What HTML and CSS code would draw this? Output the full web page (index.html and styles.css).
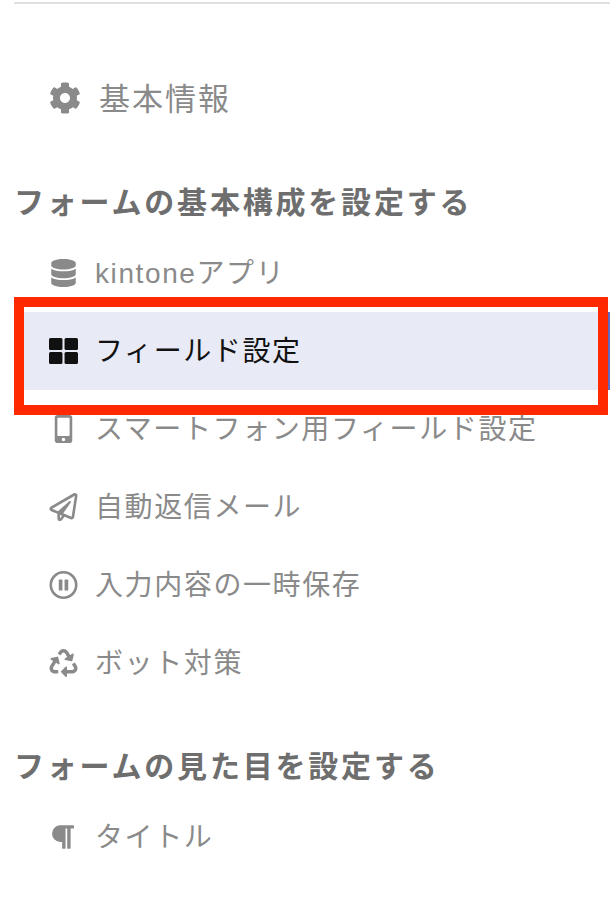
FILE: index.html
```html
<!DOCTYPE html>
<html lang="ja">
<head>
    <meta charset="UTF-8">
    <meta name="viewport" content="width=device-width, initial-scale=1.0">
    <title>フォーム設定</title>
    <link rel="stylesheet" href="styles.css">
</head>
<body>

    <nav class="sidebar">
        <a class="item item-top">
            <svg class="icon icon-gear" viewBox="0 0 512 512"><path d="M487.4 315.7l-42.6-24.6c4.3-23.2 4.3-47 0-70.2l42.6-24.6c4.9-2.8 7.1-8.6 5.5-14-11.1-35.6-30-67.8-54.7-94.6-3.8-4.1-10-5.1-14.8-2.3L380.8 110c-17.9-15.4-38.5-27.3-60.8-35.1V25.8c0-5.6-3.9-10.5-9.4-11.7-36.7-8.2-74.3-7.8-109.2 0-5.5 1.2-9.4 6.1-9.4 11.7V75c-22.2 7.9-42.8 19.8-60.8 35.1L88.7 85.5c-4.9-2.8-11-1.9-14.8 2.3-24.7 26.7-43.6 58.9-54.7 94.6-1.7 5.4.6 11.2 5.5 14L67.3 221c-4.3 23.2-4.3 47 0 70.2l-42.6 24.6c-4.9 2.8-7.1 8.6-5.5 14 11.1 35.6 30 67.8 54.7 94.6 3.8 4.1 10 5.1 14.8 2.3l42.6-24.6c17.9 15.4 38.5 27.3 60.8 35.1v49.2c0 5.6 3.9 10.5 9.4 11.7 36.7 8.2 74.3 7.8 109.2 0 5.5-1.2 9.4-6.1 9.4-11.7v-49.2c22.2-7.9 42.8-19.8 60.8-35.1l42.6 24.6c4.9 2.8 11 1.9 14.8-2.3 24.7-26.7 43.6-58.9 54.7-94.6 1.5-5.5-.7-11.3-5.6-14.1zM256 336c-44.1 0-80-35.9-80-80s35.9-80 80-80 80 35.9 80 80-35.9 80-80 80z"/></svg>
            <span class="label">基本情報</span>
        </a>

        <h2 class="heading">フォームの基本構成を設定する</h2>
        <a class="item">
            <svg class="icon" viewBox="0 0 448 512"><path d="M448 73.143v45.714C448 159.143 347.667 192 224 192S0 159.143 0 118.857V73.143C0 32.857 100.333 0 224 0s224 32.857 224 73.143zM448 176v102.857C448 319.143 347.667 352 224 352S0 319.143 0 278.857V176c48.125 33.143 136.208 48.572 224 48.572S399.874 209.143 448 176zm0 160v102.857C448 479.143 347.667 512 224 512S0 479.143 0 438.857V336c48.125 33.143 136.208 48.572 224 48.572S399.874 369.143 448 336z"/></svg>
            <span class="label">kintoneアプリ</span>
        </a>
        <a class="item active">
            <svg class="icon" viewBox="0 0 28 25"><rect x="0" y="0" width="13" height="11.5" rx="1.5"/><rect x="15" y="0" width="13" height="11.5" rx="1.5"/><rect x="0" y="13.5" width="13" height="11.5" rx="1.5"/><rect x="15" y="13.5" width="13" height="11.5" rx="1.5"/></svg>
            <span class="label">フィールド設定</span>
        </a>
        <a class="item">
            <svg class="icon" viewBox="0 0 320 512"><path d="M272 0H48C21.5 0 0 21.5 0 48v416c0 26.5 21.5 48 48 48h224c26.5 0 48-21.5 48-48V48c0-26.5-21.5-48-48-48zM160 480c-17.7 0-32-14.3-32-32s14.3-32 32-32 32 14.3 32 32-14.3 32-32 32zm112-108c0 6.6-5.4 12-12 12H60c-6.6 0-12-5.4-12-12V60c0-6.6 5.4-12 12-12h200c6.6 0 12 5.4 12 12v312z"/></svg>
            <span class="label">スマートフォン用フィールド設定</span>
        </a>
        <a class="item">
            <svg class="icon" viewBox="0 0 512 512"><path d="M440 6.5L24 246.4c-34.4 19.9-31.1 70.8 5.7 85.9L144 379.6V464c0 46.4 59.2 65.5 86.6 28.6l43.8-59.1 111.9 46.2c5.9 2.4 12.1 3.6 18.3 3.6 8.2 0 16.3-2.1 23.6-6.2 12.8-7.2 21.6-20 23.9-34.5l59.4-387.2c6.1-40.1-36.9-68.8-71.5-48.9zM192 464v-64.6l36.6 15.1L192 464zm212.6-28.7l-153.8-63.5L391 169.5c10.7-15.5-9.5-33.5-23.7-21.2L155.8 332.6 48 288 464 48l-59.4 387.3z"/></svg>
            <span class="label">自動返信メール</span>
        </a>
        <a class="item">
            <svg class="icon" viewBox="0 0 26 26"><path fill-rule="evenodd" d="M13 0a13 13 0 1 0 0 26a13 13 0 1 0 0-26zm0 2.4a10.6 10.6 0 1 1 0 21.2a10.6 10.6 0 1 1 0-21.2z"/><rect x="8.6" y="7.8" width="3.4" height="10.4" rx=".8"/><rect x="14" y="7.8" width="3.4" height="10.4" rx=".8"/></svg>
            <span class="label">入力内容の一時保存</span>
        </a>
        <a class="item">
            <svg class="icon" viewBox="0 0 512 512"><path d="M184.561 261.903c3.232 13.997-12.123 24.635-24.068 17.168l-40.736-25.455-50.867 81.402C55.606 356.273 70.96 384 96.012 384H148c6.627 0 12 5.373 12 12v40c0 6.627-5.373 12-12 12H96.115c-75.334 0-121.302-83.048-81.408-146.88l50.822-81.388-40.725-25.448c-12.081-7.547-8.966-25.961 4.879-29.158l110.237-25.45c8.611-1.988 17.201 3.381 19.189 11.99l25.452 110.237zm98.561-182.915l41.289 66.076-40.74 25.457c-12.051 7.528-9 25.953 4.879 29.158l110.237 25.45c8.672 1.999 17.215-3.438 19.189-11.99l25.45-110.237c3.197-13.845-11.99-24.718-24.068-17.168l-40.687 25.424-41.263-66.082c-37.521-60.033-125.209-60.171-162.816 0l-17.963 28.766c-3.51 5.62-1.8 13.021 3.82 16.533l33.919 21.195c5.62 3.512 13.024 1.803 16.536-3.817l17.961-28.743c12.712-20.341 41.973-19.676 54.257-.022zM497.288 301.12l-27.515-44.065c-3.511-5.623-10.916-7.334-16.538-3.821l-33.861 21.159c-5.62 3.512-7.33 10.915-3.818 16.536l27.564 44.112c13.257 21.211-2.057 48.96-27.136 48.96H320V336.02c0-14.213-17.242-21.383-27.313-11.313l-80 79.981c-6.249 6.248-6.249 16.379 0 22.627l80 79.989C302.689 517.308 320 510.3 320 495.989V448h95.88c75.274 0 121.335-82.997 81.408-146.88z"/></svg>
            <span class="label">ボット対策</span>
        </a>

        <h2 class="heading">フォームの見た目を設定する</h2>
        <a class="item">
            <svg class="icon icon-para" viewBox="32 32 416 448"><path d="M448 48v32a16 16 0 0 1-16 16h-48v368a16 16 0 0 1-16 16h-32a16 16 0 0 1-16-16V96h-32v368a16 16 0 0 1-16 16h-32a16 16 0 0 1-16-16V352h-32a160 160 0 0 1 0-320h240a16 16 0 0 1 16 16z"/></svg>
            <span class="label">タイトル</span>
        </a>
    </nav>

</body>
</html>
```

FILE: styles.css
```css
body {
    margin: 0;
    background-color: #fff;
    font-family: "Liberation Sans", "Noto Sans CJK JP", sans-serif;
    overflow: hidden;
}

.sidebar {
    margin: 2px 0 0 14px;
    border-top: 2px solid #e0e0e0;
    padding-top: 56px;
}

.item {
    position: relative;
    display: flex;
    align-items: center;
    gap: 17px;
    height: 78px;
    padding-left: 35px;
    font-size: 28px;
    letter-spacing: 1.6px;
    color: #8a8a8a;
}

.label {
    line-height: 40px;
    margin-top: 2px;
}

.item-top {
    gap: 18px;
    font-size: 31px;
    letter-spacing: 2px;
}

.icon {
    flex: none;
    width: 29px;
    height: 28px;
    fill: #8a8a8a;
}

.icon-gear {
    width: 32px;
    height: 32px;
    margin-top: -2px;
}

.icon-para {
    width: 22px;
    height: 24px;
    margin: 0 4px 0 3px;
}

.heading {
    margin: 0;
    padding: 45px 0 11px;
    font-size: 30px;
    line-height: 40px;
    font-weight: 700;
    letter-spacing: 2.8px;
    color: #6e6e6e;
}

.active {
    background-color: #e8eaf6;
    color: #111;
}

.active .icon {
    fill: #111;
}

/* purple edge on the right of the current row */
.active::before {
    content: "";
    position: absolute;
    top: 0;
    right: 0;
    bottom: 0;
    width: 2px;
    background-color: #5c6bc0;
}

/* red annotation frame over the current row */
.active::after {
    content: "";
    position: absolute;
    top: -15px;
    right: 2px;
    bottom: -25px;
    left: 0;
    border: 10px solid #ff2a00;
}
```
